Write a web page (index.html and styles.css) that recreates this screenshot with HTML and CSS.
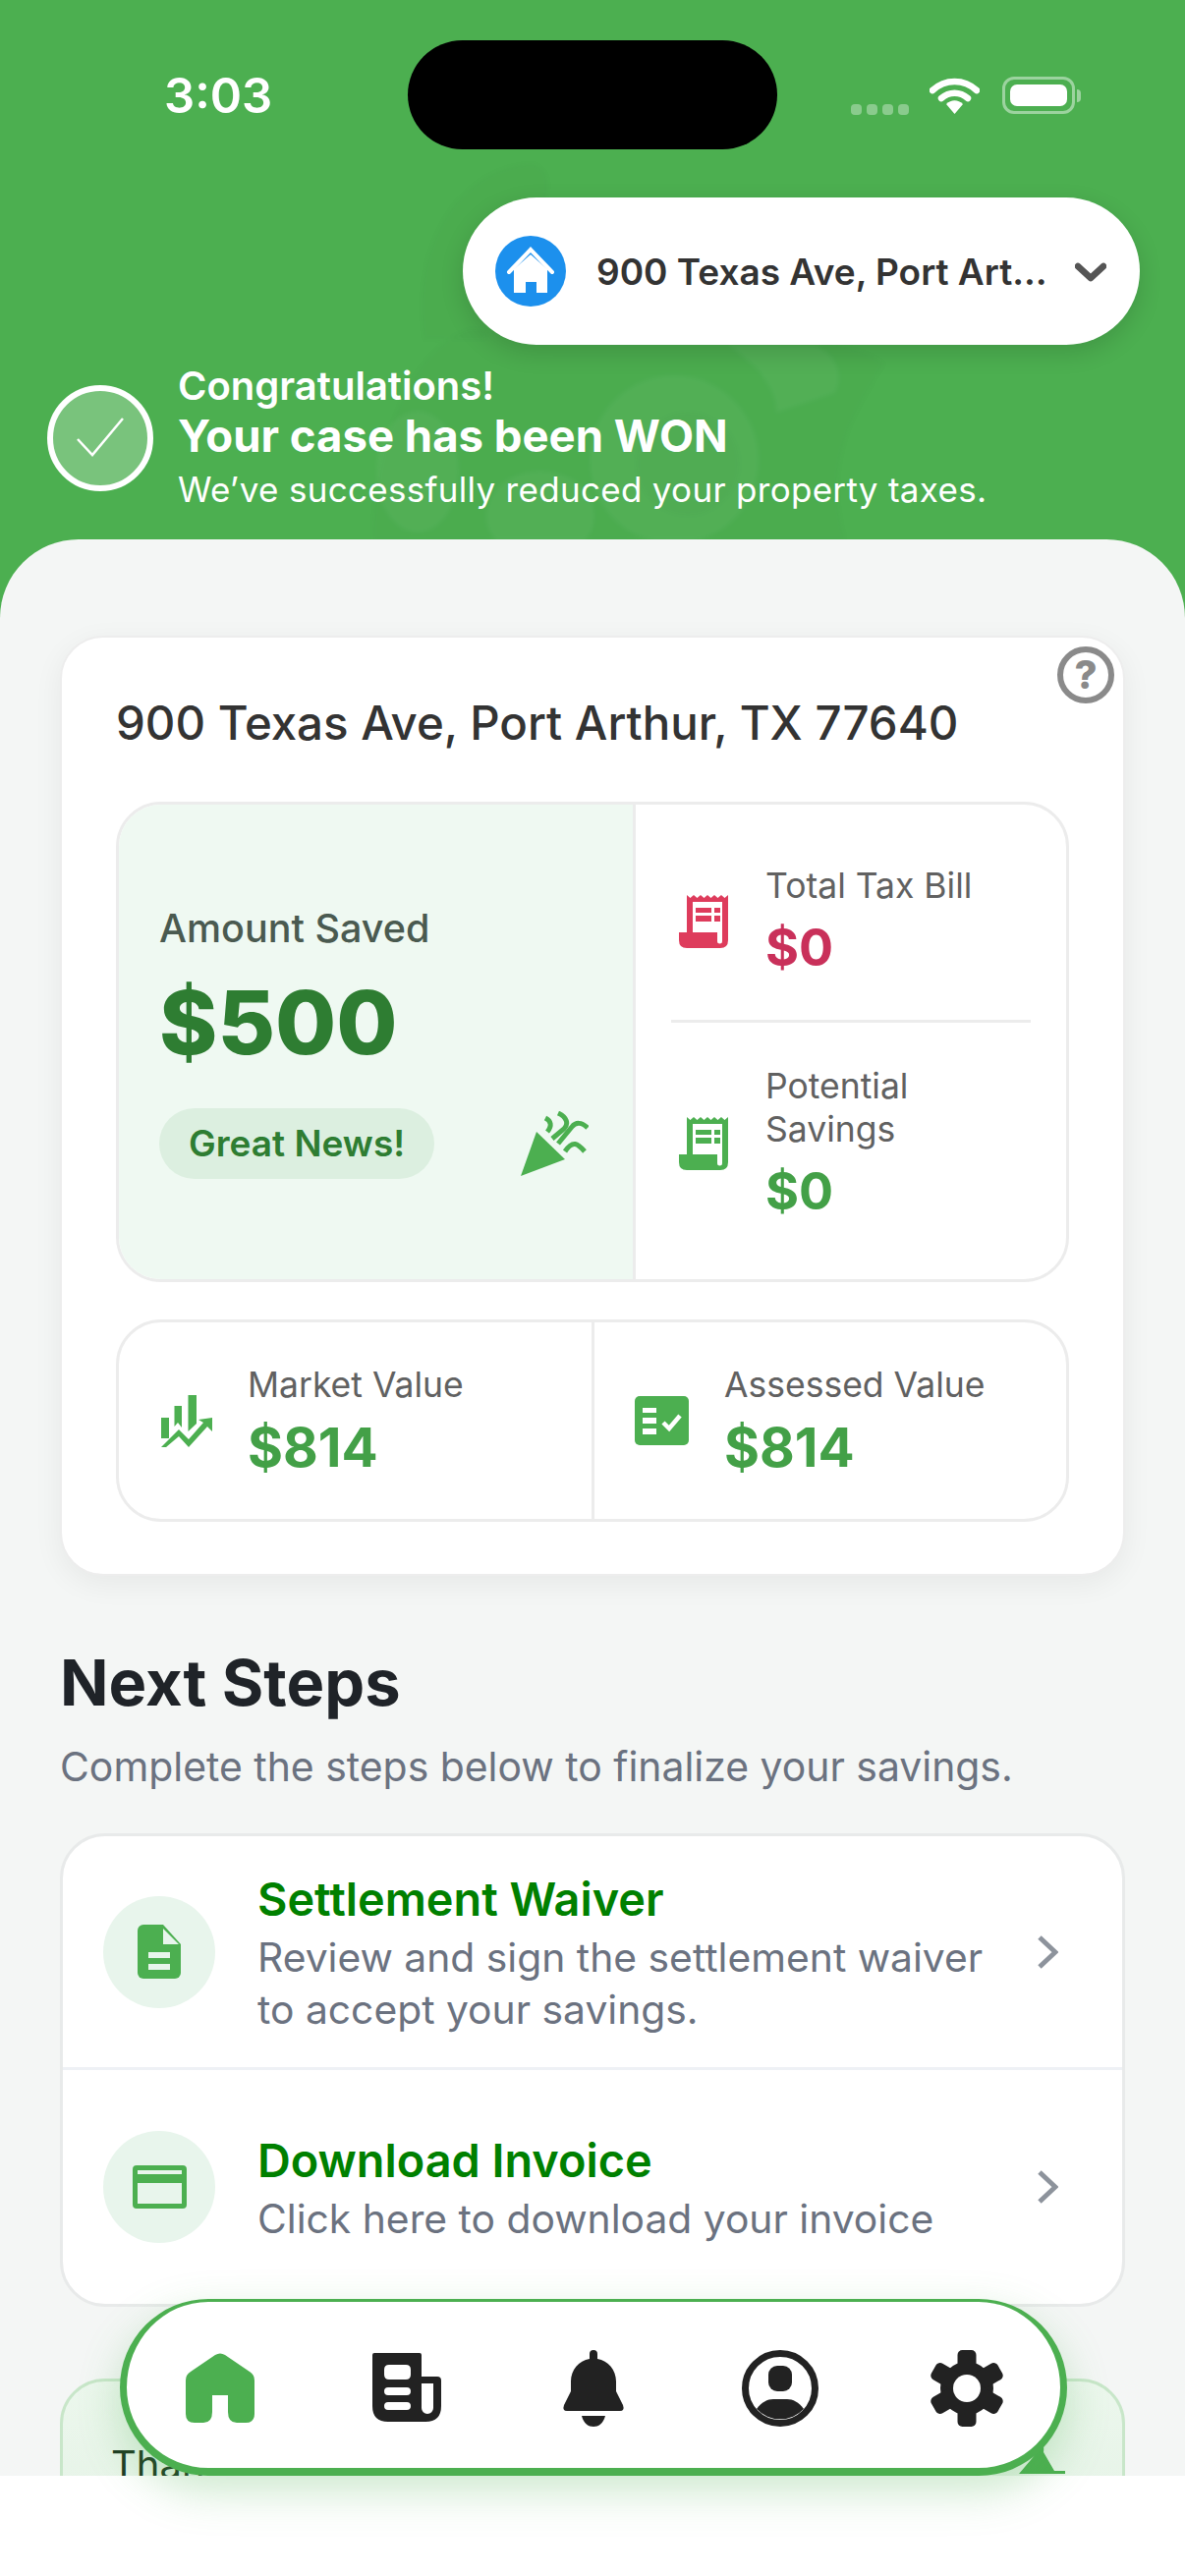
FILE: index.html
```html
<!DOCTYPE html>
<html lang="en">
<head>
    <meta charset="UTF-8">
    <meta name="viewport" content="width=device-width, initial-scale=1.0">
    <title>Property Tax Case</title>
    <link rel="stylesheet" href="styles.css">
</head>
<body>
<div class="screen">
    <div class="clip">
        <!-- faint mascot behind the header -->
        <svg class="mascot" viewBox="0 0 1206 560">
            <path class="m-dark" d="M432 345C418 260 460 172 540 167C566 170 560 205 540 232C510 272 498 300 494 345Z"/>
            <path class="m-dark" d="M380 549C380 450 420 350 480 335L640 350C720 330 860 340 900 370C860 430 840 480 860 549Z"/>
            <circle class="m-light" cx="686" cy="468" r="86"/>
            <circle class="m-dark" cx="700" cy="472" r="52"/>
            <ellipse class="m-light" cx="425" cy="480" rx="42" ry="62"/>
            <ellipse class="m-light" cx="550" cy="525" rx="55" ry="46"/>
            <path class="m-light" d="M740 350C780 380 790 400 790 420L850 400C860 380 850 360 830 352Z"/>
        </svg>

        <div class="status">
            <span class="time">3:03</span>
            <div class="status-right">
                <div class="signal"><i></i><i></i><i></i><i></i></div>
                <svg class="wifi" viewBox="0 0 51 37">
                    <path d="M3 13C16 1 35 1 48 13" fill="none" stroke="#fff" stroke-width="6.500" stroke-linecap="round"/>
                    <path d="M12 21C20 14 31 14 39 21" fill="none" stroke="#fff" stroke-width="6.500" stroke-linecap="round"/>
                    <path d="M17 27C22 22 29 22 34 27L25.500 37Z" fill="#fff"/>
                </svg>
                <div class="battery"><div class="battery-fill"></div></div>
                <div class="battery-nub"></div>
            </div>
        </div>
        <div class="island"></div>

        <div class="address-pill">
            <svg class="pill-icon" viewBox="0 0 72 72">
                <circle cx="36" cy="36" r="36" fill="#1c90ed"/>
                <path d="M19 34L36 19L53 34V58H42V47H31V58H19Z" fill="#fff"/>
                <path d="M14 37L36 14L58 37" fill="none" stroke="#fff" stroke-width="4" stroke-linecap="round"/>
            </svg>
            <span class="pill-text">900 Texas Ave, Port Art…</span>
            <svg class="pill-chevron" viewBox="0 0 32 20">
                <path d="M3 4L16 16L29 4" fill="none" stroke="#555" stroke-width="6.500" stroke-linecap="round" stroke-linejoin="round"/>
            </svg>
        </div>

        <div class="banner">
            <div class="banner-check">
                <svg viewBox="0 0 96 96" class="check-svg">
                    <path d="M25 49L40 65L71 28" fill="none" stroke="#fff" stroke-width="2.500"/>
                </svg>
            </div>
            <div class="banner-text">
                <div class="banner-small">Congratulations!</div>
                <div class="banner-big">Your case has been WON</div>
                <div class="banner-note">We’ve successfully reduced your property taxes.</div>
            </div>
        </div>

        <div class="sheet">
            <div class="card">
                <div class="help">?</div>
                <h2 class="card-title">900 Texas Ave, Port Arthur, TX 77640</h2>

                <div class="savings-box">
                    <div class="saved">
                        <div class="saved-label">Amount Saved</div>
                        <div class="saved-amount">$500</div>
                        <div class="saved-row">
                            <span class="news-pill">Great News!</span>
                            <svg class="party" viewBox="0 0 69 66">
                                <path d="M0 66L16 21L45 49Z" fill="#4caf50"/>
                                <g fill="none" stroke="#4caf50" stroke-width="5">
                                    <path d="M25 7C31 10 32 15 27 21"/>
                                    <path d="M38 2C47 6 49 13 44 18L32 28"/>
                                    <path d="M68 17C62 11 56 11 52 16L38 33"/>
                                    <path d="M65 41C58 33 53 29 45 41"/>
                                </g>
                            </svg>
                        </div>
                    </div>
                    <div class="bills">
                        <div class="bill-row bill-top">
                            <svg class="receipt red" viewBox="0 0 50 54">
                                <path fill-rule="evenodd" d="M8 0L11.500 3L15 0L18.500 3L22 0L25.500 3L29 0L32.500 3L36 0L39.500 3L43 0L46.500 3L50 0V46Q50 54 42 54H8Q0 54 0 46V38H8ZM14 7V38H39V47A2.500 2.500 0 0 0 44 47V7Z"/>
                                <path d="M17 13H33V18H17ZM17 21H33V27H17ZM36 13H42V18H36ZM36 21H42V27H36Z"/>
                            </svg>
                            <div>
                                <div class="stat-label">Total Tax Bill</div>
                                <div class="stat-value text-red">$0</div>
                            </div>
                        </div>
                        <div class="bill-row bill-bottom">
                            <svg class="receipt green" viewBox="0 0 50 54">
                                <path fill-rule="evenodd" d="M8 0L11.500 3L15 0L18.500 3L22 0L25.500 3L29 0L32.500 3L36 0L39.500 3L43 0L46.500 3L50 0V46Q50 54 42 54H8Q0 54 0 46V38H8ZM14 7V38H39V47A2.500 2.500 0 0 0 44 47V7Z"/>
                                <path d="M17 13H33V18H17ZM17 21H33V27H17ZM36 13H42V18H36ZM36 21H42V27H36Z"/>
                            </svg>
                            <div>
                                <div class="stat-label">Potential<br>Savings</div>
                                <div class="stat-value text-green">$0</div>
                            </div>
                        </div>
                    </div>
                </div>

                <div class="values-box">
                    <div class="value-cell market">
                        <svg class="market-icon" viewBox="0 0 52 53">
                            <g fill="#4caf50">
                                <path d="M0 23H8V44H0ZM13.500 11H21V33L17 28L13.500 32ZM27.500 0H36V29L27.500 37Z"/>
                                <path d="M38 25L52 23V37L47 32L28 53L18 42L5 53H0L18 35L28 45L43 28Z"/>
                            </g>
                        </svg>
                        <div>
                            <div class="stat-label">Market Value</div>
                            <div class="stat-value stat-big text-green">$814</div>
                        </div>
                    </div>
                    <div class="value-cell assessed">
                        <svg class="assessed-icon" viewBox="0 0 55 50">
                            <rect width="55" height="50" rx="5" fill="#4caf50"/>
                            <path d="M8 12H22V17H8ZM8 22H22V28H8ZM8 33H22V39H8Z" fill="#fff"/>
                            <path d="M29 27L35 33L46 20" fill="none" stroke="#fff" stroke-width="4.500"/>
                        </svg>
                        <div>
                            <div class="stat-label">Assessed Value</div>
                            <div class="stat-value stat-big text-green">$814</div>
                        </div>
                    </div>
                </div>
            </div>

            <h2 class="steps-title">Next Steps</h2>
            <p class="steps-sub">Complete the steps below to finalize your savings.</p>

            <div class="steps">
                <div class="step">
                    <div class="step-circle">
                        <svg class="doc-icon" viewBox="0 0 44 55">
                            <path d="M6 0H26L44 20V49A6 6 0 0 1 38 55H6A6 6 0 0 1 0 49V6A6 6 0 0 1 6 0Z" fill="#4caf50"/>
                            <path d="M26 4V20H42Z" fill="#e8f5ec"/>
                            <path d="M11 28H33V34H11ZM11 40H33V46H11Z" fill="#e8f5ec"/>
                        </svg>
                    </div>
                    <div class="step-text">
                        <div class="step-title">Settlement Waiver</div>
                        <div class="step-desc">Review and sign the settlement waiver to accept your savings.</div>
                    </div>
                    <svg class="step-chevron" viewBox="0 0 22 36">
                        <path d="M3 3L19 18L3 33" fill="none" stroke="#8d939c" stroke-width="5"/>
                    </svg>
                </div>
                <div class="step step-last">
                    <div class="step-circle">
                        <svg class="card-icon" viewBox="0 0 55 44">
                            <path fill-rule="evenodd" fill="#4caf50" d="M4 0H51A4 4 0 0 1 55 4V40A4 4 0 0 1 51 44H4A4 4 0 0 1 0 40V4A4 4 0 0 1 4 0ZM5 5V9H50V5ZM5 18V39H50V18Z"/>
                        </svg>
                    </div>
                    <div class="step-text">
                        <div class="step-title">Download Invoice</div>
                        <div class="step-desc">Click here to download your invoice</div>
                    </div>
                    <svg class="step-chevron" viewBox="0 0 22 36">
                        <path d="M3 3L19 18L3 33" fill="none" stroke="#8d939c" stroke-width="5"/>
                    </svg>
                </div>
            </div>

            <div class="thanks">
                <div class="thanks-text">Thanks</div>
                <svg class="thanks-icon" viewBox="0 0 50 30">
                    <path d="M0 30L23 3Q26 0 25 8L36 27H47V30Z" fill="#4caf50"/>
                </svg>
            </div>
        </div>
    </div>

    <nav class="tabbar">
        <svg class="tab home" viewBox="0 0 70 71">
            <path d="M30 2Q35 -1 40 2L65 19Q70 22 70 28V62Q70 71 61 71H52Q43 71 43 60V43H27V60Q27 71 18 71H9Q0 71 0 62V28Q0 22 5 19Z" fill="#4caf50"/>
        </svg>
        <svg class="tab news" viewBox="0 0 70 71">
            <path fill-rule="evenodd" fill="#222" d="M2 0H48Q50 0 50 2V24H66Q70 24 70 28V54Q70 70 54 70H16Q0 70 0 54V2Q0 0 2 0ZM17 12Q12 12 12 17V22Q12 27 17 27H34Q39 27 39 22V17Q39 12 34 12ZM16 35A4 4 0 0 0 16 43H35A4 4 0 0 0 35 35ZM16 50A4 4 0 0 0 16 58H35A4 4 0 0 0 35 50ZM50 31V56A6 6 0 0 0 62 56V31Z"/>
        </svg>
        <svg class="tab bell" viewBox="0 0 62 78">
            <path fill="#222" d="M27 9V4A4 4 0 0 1 35 4V9C46 11 54 20 54 32V42L61 56Q63 62 58 62H4Q-1 62 1 56L8 42V32C8 20 16 11 27 9ZM19 67H43C41 75 36 78 31 78C26 78 21 75 19 67Z"/>
        </svg>
        <svg class="tab profile" viewBox="0 0 78 78">
            <circle cx="39" cy="39" r="35.500" fill="none" stroke="#222" stroke-width="7"/>
            <rect x="27" y="16" width="24" height="26" rx="9" fill="#222"/>
            <path d="M15 60C20 53 26 50 32 50H46C52 50 58 53 63 60A33 33 0 0 1 15 60Z" fill="#222"/>
        </svg>
        <svg class="tab gear" viewBox="0 0 78 78">
            <g fill="#222">
                <circle cx="39" cy="39" r="27"/>
                <rect x="29.500" y="0" width="19" height="78" rx="5"/>
                <rect x="29.500" y="0" width="19" height="78" rx="5" transform="rotate(60 39 39)"/>
                <rect x="29.500" y="0" width="19" height="78" rx="5" transform="rotate(120 39 39)"/>
            </g>
            <circle cx="39" cy="39" r="14" fill="#fff"/>
        </svg>
    </nav>
</div>
</body>
</html>
```

FILE: styles.css
```css
* {
    box-sizing: border-box;
}
body {
    margin: 0;
    font-family: Inter, "Liberation Sans", sans-serif;
    background-color: #fff;
}
h2, p {
    margin: 0;
}
svg {
    display: block;
    flex-shrink: 0;
}
.screen {
    position: relative;
    width: 1206px;
    height: 2622px;
    overflow: hidden;
    background-color: #fff;
}
.clip {
    position: relative;
    isolation: isolate;
    height: 2520px;
    overflow: hidden;
    background-color: #4caf50;
}
.mascot {
    position: absolute;
    top: 0;
    left: 0;
    width: 1206px;
    height: 560px;
    z-index: -1;
    filter: blur(2px);
}
.m-dark {
    fill: rgba(60, 90, 60, 0.04);
}
.m-light {
    fill: rgba(255, 255, 255, 0.045);
}

/* status bar */
.status {
    display: flex;
    justify-content: space-between;
    align-items: center;
    height: 194px;
    padding: 0 106px 0 167px;
}
.time {
    font-size: 49px;
    font-weight: 600;
    color: #fff;
}
.status-right {
    display: flex;
    align-items: center;
}
.signal {
    display: flex;
    gap: 5px;
    margin: 28px 21px 0 0;
}
.signal i {
    width: 11px;
    height: 11px;
    border-radius: 4px;
    background-color: rgba(255, 255, 255, 0.35);
}
.wifi {
    width: 51px;
    height: 37px;
    margin-right: 23px;
}
.battery {
    width: 74px;
    height: 38px;
    padding: 5px;
    border: 3px solid rgba(255, 255, 255, 0.45);
    border-radius: 12px;
}
.battery-fill {
    height: 100%;
    border-radius: 7px;
    background-color: #fff;
}
.battery-nub {
    width: 4px;
    height: 13px;
    margin-left: 2px;
    border-radius: 0 4px 4px 0;
    background-color: rgba(255, 255, 255, 0.45);
}
.island {
    position: absolute;
    top: 41px;
    left: 415px;
    width: 376px;
    height: 111px;
    border-radius: 56px;
    background-color: #000;
}

/* address selector */
.address-pill {
    display: flex;
    align-items: center;
    width: 689px;
    height: 150px;
    margin: 7px 46px 0 auto;
    padding-left: 33px;
    border-radius: 75px;
    background-color: #fff;
    box-shadow: 0 8px 24px rgba(0, 0, 0, 0.14);
}
.pill-icon {
    width: 72px;
    height: 72px;
}
.pill-text {
    width: 458px;
    margin-left: 31px;
    white-space: nowrap;
    font-size: 37px;
    font-weight: 600;
    color: #333;
}
.pill-chevron {
    width: 32px;
    height: 20px;
    margin: 2px 0 0 29px;
}

/* case won banner */
.banner {
    display: flex;
    align-items: center;
    margin-top: 19px;
    padding-left: 48px;
    color: #fff;
}
.banner-check {
    width: 108px;
    height: 108px;
    border: 6px solid #fff;
    border-radius: 50%;
    background-color: rgba(255, 255, 255, 0.25);
}
.check-svg {
    width: 96px;
    height: 96px;
}
.banner-text {
    margin-left: 25px;
}
.banner-small {
    font-size: 40px;
    font-weight: 600;
    line-height: 46px;
}
.banner-big {
    font-size: 45.500px;
    font-weight: 700;
    line-height: 46px;
    margin-top: 5px;
}
.banner-note {
    font-size: 35px;
    line-height: 46px;
    margin-top: 8px;
    letter-spacing: 0.3px;
}

/* sheet */
.sheet {
    margin-top: 28px;
    height: 1971px;
    padding: 98px 61px 0;
    border-radius: 80px 80px 0 0;
    background-color: #f4f6f5;
}
.card {
    position: relative;
    padding: 57px 55px 53px;
    border: 2px solid #ededed;
    border-radius: 44px;
    background-color: #fff;
    box-shadow: 0 8px 30px rgba(0, 0, 0, 0.06);
}
.help {
    position: absolute;
    top: 9px;
    right: 9px;
    width: 58px;
    height: 58px;
    border: 6px solid #8a8a8a;
    border-radius: 50%;
    font-size: 40px;
    font-weight: 800;
    line-height: 46px;
    text-align: center;
    color: #8a8a8a;
}
.card-title {
    font-size: 47.400px;
    font-weight: 500;
    line-height: 60px;
    color: #333;
}
.savings-box {
    display: flex;
    height: 489px;
    margin-top: 50px;
    border: 3px solid #ececec;
    border-radius: 46px;
    overflow: hidden;
}
.saved {
    display: flex;
    flex-direction: column;
    justify-content: center;
    width: 526px;
    padding: 0 45px 0 41px;
    border-right: 3px solid #ececec;
    background-color: #eff9f2;
}
.saved-label {
    font-size: 39.500px;
    font-weight: 500;
    line-height: 48px;
    color: #4a5a50;
}
.saved-amount {
    margin-top: 22px;
    font-size: 90px;
    font-weight: 800;
    line-height: 100px;
    color: #2e7d32;
}
.saved-row {
    display: flex;
    justify-content: space-between;
    align-items: center;
    margin-top: 37px;
}
.news-pill {
    padding: 0 30px;
    border-radius: 36px;
    font-size: 37px;
    font-weight: 600;
    line-height: 72px;
    color: #2e7d32;
    background-color: #dcefe0;
}
.party {
    width: 69px;
    height: 66px;
}
.bills {
    flex: 1;
    display: flex;
    flex-direction: column;
    padding: 0 36px;
}
.bill-row {
    display: flex;
    align-items: center;
    padding-left: 8px;
}
.bill-top {
    height: 222px;
    padding-top: 18px;
    border-bottom: 3px solid #ececec;
}
.bill-bottom {
    flex: 1;
    padding-bottom: 16px;
}
.receipt {
    width: 50px;
    height: 54px;
    margin-right: 38px;
}
.receipt.red {
    fill: #de3c5c;
}
.receipt.green {
    fill: #4caf50;
}
.stat-label {
    font-size: 35.500px;
    line-height: 44px;
    color: #616161;
}
.stat-value {
    margin-top: 10px;
    font-size: 52px;
    font-weight: 700;
    line-height: 62px;
}
.stat-big {
    font-size: 55px;
}
.text-red {
    color: #c9305a;
}
.text-green {
    color: #43a047;
}
.values-box {
    display: flex;
    height: 206px;
    margin-top: 38px;
    border: 3px solid #ececec;
    border-radius: 46px;
}
.value-cell {
    display: flex;
    align-items: center;
}
.market {
    width: 484px;
    padding-left: 43px;
    border-right: 3px solid #ececec;
}
.assessed {
    flex: 1;
    padding-left: 41px;
}
.market-icon {
    width: 52px;
    height: 53px;
    margin-right: 36px;
}
.assessed-icon {
    width: 55px;
    height: 50px;
    margin-right: 36px;
}

/* next steps */
.steps-title {
    margin-top: 71px;
    font-size: 65px;
    font-weight: 700;
    line-height: 76px;
    color: #1f2328;
}
.steps-sub {
    margin-top: 21px;
    font-size: 40.900px;
    line-height: 52px;
    color: #6b7280;
}
.steps {
    margin-top: 42px;
    border: 3px solid #e8eaea;
    border-radius: 46px;
    background-color: #fff;
}
.step {
    display: flex;
    align-items: center;
    height: 238px;
    padding-left: 41px;
    border-bottom: 3px solid #eef1f5;
}
.step-last {
    border-bottom: none;
}
.step-circle {
    display: flex;
    justify-content: center;
    align-items: center;
    flex-shrink: 0;
    width: 114px;
    height: 114px;
    border-radius: 50%;
    background-color: #e8f5ec;
}
.doc-icon {
    width: 44px;
    height: 55px;
}
.card-icon {
    width: 55px;
    height: 44px;
}
.step-text {
    width: 762px;
    margin: 2px 31px 0 43px;
}
.step-title {
    font-size: 46.800px;
    font-weight: 600;
    line-height: 60px;
    color: #008000;
}
.step-desc {
    margin-top: 3px;
    font-size: 40.800px;
    line-height: 53px;
    color: #6b7280;
}
.step-chevron {
    width: 22px;
    height: 36px;
}
.thanks {
    position: relative;
    height: 200px;
    margin-top: 73px;
    padding: 60px 49px 0;
    border: 3px solid #c8e6c9;
    border-radius: 46px;
    background: linear-gradient(#ecf7ed, #e3f2e4);
}
.thanks-text {
    font-size: 40px;
    line-height: 50px;
    color: #1e3a22;
}
.thanks-icon {
    position: absolute;
    top: 64px;
    right: 55px;
    width: 50px;
    height: 30px;
}

/* bottom tabs */
.tabbar {
    position: absolute;
    top: 2340px;
    left: 122px;
    display: flex;
    justify-content: space-around;
    align-items: center;
    width: 964px;
    height: 180px;
    border-style: solid;
    border-color: #4caf50;
    border-width: 3px 7px 8px;
    border-radius: 90px;
    padding-top: 6px;
    background-color: #fff;
    box-shadow: 0 16px 44px rgba(76, 175, 80, 0.28);
}
.tab {
    height: 71px;
    width: 78px;
}
.bell, .profile, .gear {
    height: 78px;
}
```
